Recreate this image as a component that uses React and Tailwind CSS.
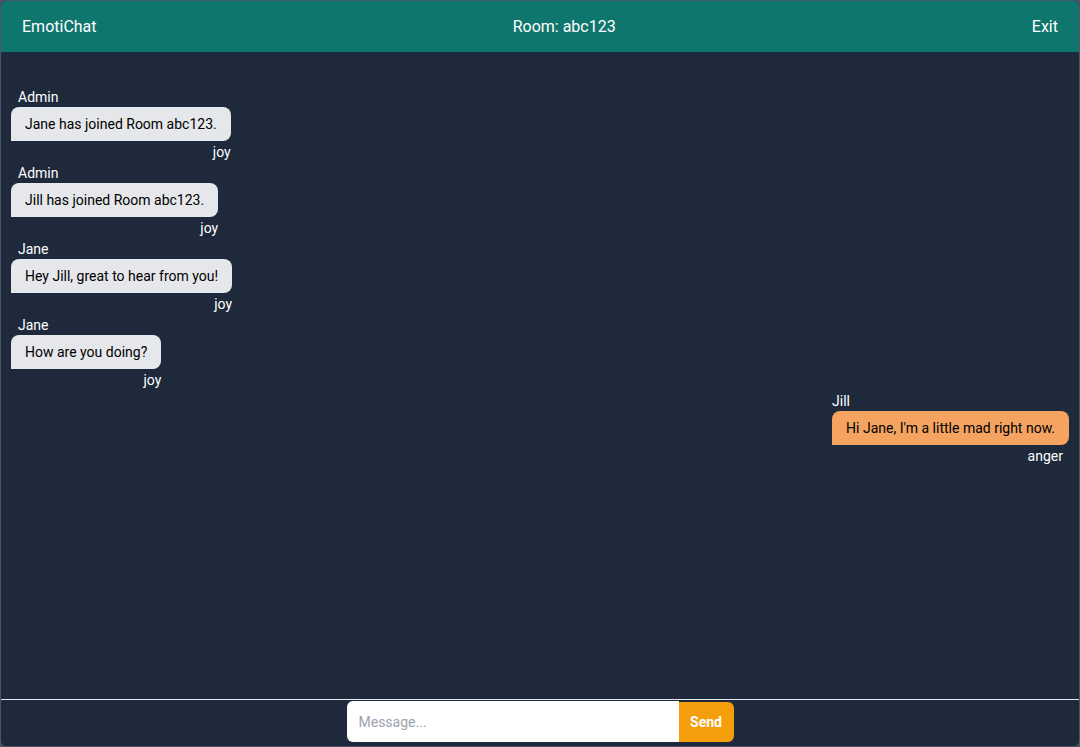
import React from "react";

const messages = [
  { name: "Admin", text: "Jane has joined Room abc123.", emotion: "joy", mine: false },
  { name: "Admin", text: "Jill has joined Room abc123.", emotion: "joy", mine: false },
  { name: "Jane", text: "Hey Jill, great to hear from you!", emotion: "joy", mine: false },
  { name: "Jane", text: "How are you doing?", emotion: "joy", mine: false },
  { name: "Jill", text: "Hi Jane, I'm a little mad right now.", emotion: "anger", mine: true },
];

function Message({ m }) {
  if (m.mine) {
    return (
      <div className="flex justify-end">
        <div className="flex flex-col">
          <div className="h-5 leading-5 text-sm text-white">{m.name}</div>
          <div className="h-[34px] px-[14px] py-[7px] leading-5 text-sm text-black bg-[#f4a460] rounded-t-lg rounded-br-lg">
            {m.text}
          </div>
          <div className="h-5 leading-5 text-sm text-white text-right pr-[6px] mt-[1px]">{m.emotion}</div>
        </div>
      </div>
    );
  }
  return (
    <div className="flex justify-start">
      <div className="flex flex-col">
        <div className="h-5 leading-5 text-sm text-white pl-[7px]">{m.name}</div>
        <div className="h-[34px] px-[14px] py-[7px] leading-5 text-sm text-black bg-[#e5e7eb] rounded-t-lg rounded-br-lg">
          {m.text}
        </div>
        <div className="h-5 leading-5 text-sm text-white text-right mt-[1px]">{m.emotion}</div>
      </div>
    </div>
  );
}

export default function App() {
  return (
    <div
      className="w-[1080px] h-[747px] bg-[#4b5563]"
      style={{ fontFamily: "Roboto, 'Liberation Sans', Arial, sans-serif" }}
    >
      <div className="w-full h-full flex flex-col bg-[#1e293b] border border-[#475569] rounded-md overflow-hidden">
        <header className="h-[51px] shrink-0 bg-[#0f766e] flex items-center justify-between px-[21px] text-white text-base">
          <span>EmotiChat</span>
          <span>Room: abc123</span>
          <span>Exit</span>
        </header>
        <main className="flex-1 flex flex-col gap-[1px] pt-[35px] px-[10px]">
          {messages.map((m, i) => (
            <Message key={i} m={m} />
          ))}
        </main>
        <div className="h-[47px] shrink-0 border-t border-[#e5e7eb] flex justify-center items-start pt-[1px]">
          <input
            className="w-[332px] h-[41px] bg-white rounded-l-md px-3 text-sm text-black placeholder:text-[#9ca3af] outline-none"
            placeholder="Message..."
          />
          <button className="w-[55px] h-[40px] mt-[1px] bg-[#f59e0b] text-white font-bold text-sm rounded-r-md">
            Send
          </button>
        </div>
      </div>
    </div>
  );
}
